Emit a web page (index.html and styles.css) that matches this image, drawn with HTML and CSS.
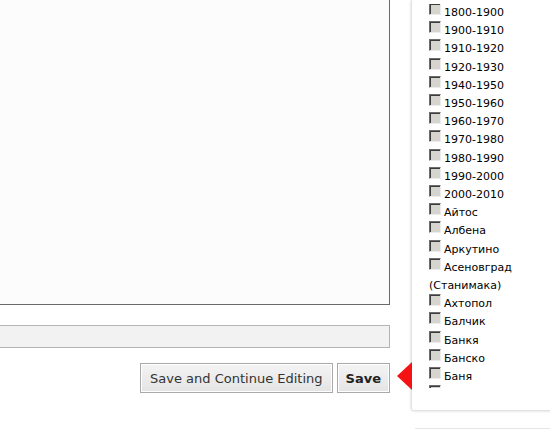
FILE: index.html
```html
<!DOCTYPE html>
<html lang="bg">
<head>
    <meta charset="UTF-8">
    <meta name="viewport" content="width=device-width, initial-scale=1.0">
    <title>Редакция</title>
    <link rel="stylesheet" href="styles.css">
</head>
<body>
    <div class="page">
        <div class="main">
            <textarea class="body-field"></textarea>
            <input type="text" class="text-field">
            <div class="actions">
                <button class="btn">Save and Continue Editing</button>
                <button class="btn btn-save">Save</button>
                <span class="pointer"></span>
            </div>
        </div>

        <div class="side">
            <div class="panel">
                <div class="tag-list">
                    <label><input type="checkbox">1800-1900</label>
                    <label><input type="checkbox">1900-1910</label>
                    <label><input type="checkbox">1910-1920</label>
                    <label><input type="checkbox">1920-1930</label>
                    <label><input type="checkbox">1940-1950</label>
                    <label><input type="checkbox">1950-1960</label>
                    <label><input type="checkbox">1960-1970</label>
                    <label><input type="checkbox">1970-1980</label>
                    <label><input type="checkbox">1980-1990</label>
                    <label><input type="checkbox">1990-2000</label>
                    <label><input type="checkbox">2000-2010</label>
                    <label><input type="checkbox">Айтос</label>
                    <label><input type="checkbox">Албена</label>
                    <label><input type="checkbox">Аркутино</label>
                    <label><input type="checkbox">Асеновград (Станимака)</label>
                    <label><input type="checkbox">Ахтопол</label>
                    <label><input type="checkbox">Балчик</label>
                    <label><input type="checkbox">Банкя</label>
                    <label><input type="checkbox">Банско</label>
                    <label><input type="checkbox">Баня</label>
                    <label><input type="checkbox">Батак</label>
                </div>
            </div>
            <div class="next-box"></div>
        </div>
    </div>
</body>
</html>
```

FILE: styles.css
```css
html, body {
    margin: 0;
    padding: 0;
    background: #fff;
}
body {
    width: 550px;
    height: 430px;
    overflow: hidden;
    font-family: "DejaVu Sans", Verdana, sans-serif;
    color: #000;
}
.page {
    display: flex;
    gap: 21px;
}
.main {
    flex: none;
    width: 400px;
    margin-left: -10px;
    margin-top: -20px;
}
.body-field {
    display: block;
    box-sizing: border-box;
    width: 100%;
    height: 325px;
    margin: 0;
    border: 1px solid #6a6a6a;
    background: #fcfcfc;
    resize: none;
}
.text-field {
    display: block;
    box-sizing: border-box;
    width: 100%;
    height: 23px;
    margin: 20px 0 0;
    border: 1px solid #b4b4b4;
    background: #f2f2f2;
}
.actions {
    position: relative;
    display: flex;
    justify-content: flex-end;
    gap: 4px;
    margin-top: 15px;
}
.btn {
    height: 30px;
    padding: 0 9px;
    border: 1px solid #a9a9a9;
    box-shadow: inset 0 0 0 1px #fff;
    background: linear-gradient(#f4f4f4, #e4e4e4);
    font-family: "DejaVu Sans", Verdana, sans-serif;
    font-size: 13px;
    color: #333;
    cursor: pointer;
}
.btn-save {
    padding: 0 8px;
    font-weight: bold;
    color: #222;
}
/* red marker next to the save button */
.pointer {
    position: absolute;
    left: 100%;
    top: -1px;
    margin-left: 7px;
    width: 0;
    height: 0;
    border-top: 14px solid transparent;
    border-bottom: 14px solid transparent;
    border-right: 15px solid #f51212;
}
.side {
    flex: none;
    width: 200px;
}
.panel {
    height: 410px;
    box-sizing: border-box;
    padding: 4px 0 0 17px;
    border-left: 1px solid #e2e2e2;
    border-radius: 0 0 0 3px;
    box-shadow: 0 1px 3px rgba(0, 0, 0, 0.18);
}
.tag-list {
    width: 100px;
    height: 384px;
    overflow: hidden;
    font-size: 11px;
    line-height: 18.2px;
}
.tag-list label {
    display: block;
}
.tag-list input {
    -webkit-appearance: none;
    appearance: none;
    display: inline-block;
    box-sizing: border-box;
    width: 12px;
    height: 12px;
    margin: -1px 3px 0 0;
    vertical-align: top;
    border: 1px solid;
    border-color: #6e6e6e #ececec #ececec #6e6e6e;
    box-shadow: inset 1px 1px 0 #3c3c3c;
    background: #d6d4ce;
}
.next-box {
    margin: 18px 0 0 4px;
    height: 20px;
    border-top: 1px solid #e6e6e6;
}
```
